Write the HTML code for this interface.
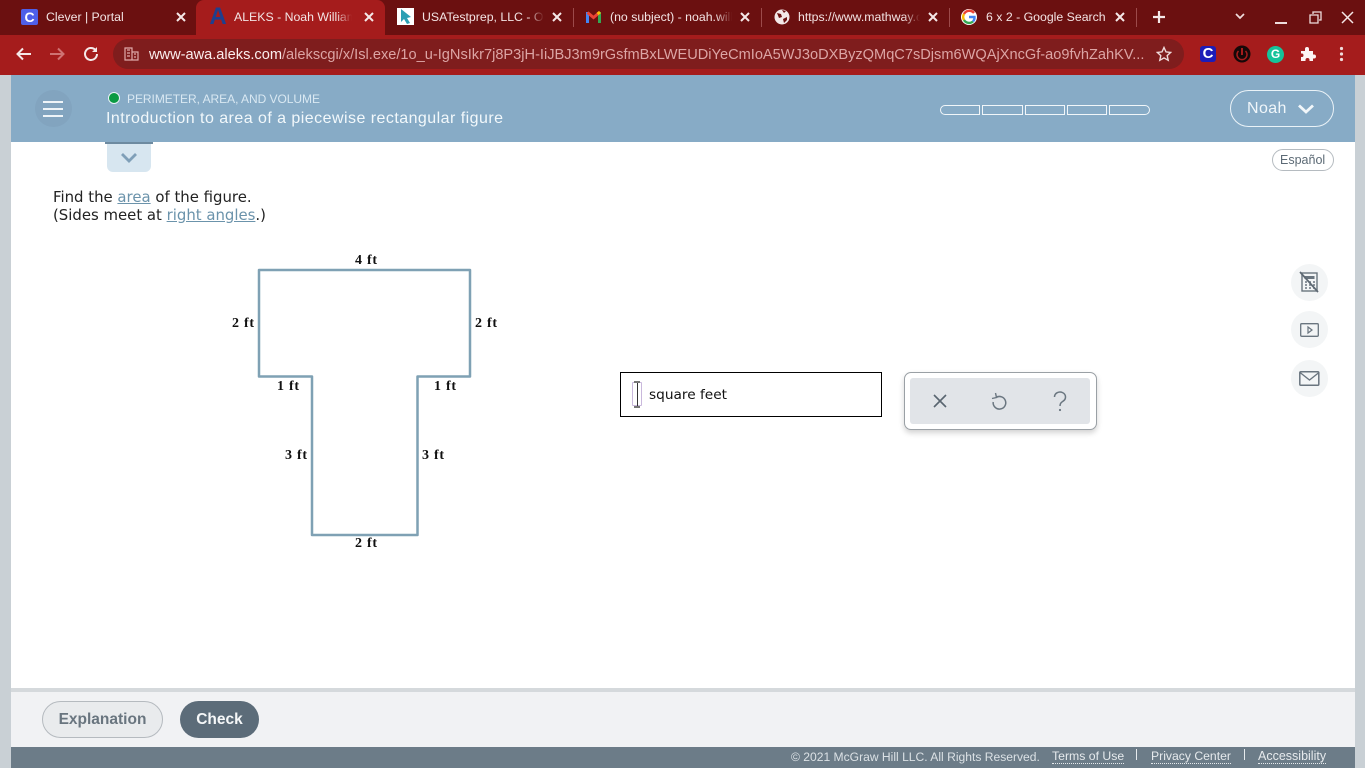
<!DOCTYPE html>
<html><head><meta charset="utf-8"><title>ALEKS</title>
<style>
html,body{margin:0;padding:0;width:1365px;height:768px;overflow:hidden;background:#fff;font-family:"Liberation Sans",sans-serif}
.a{position:absolute;white-space:nowrap}
.tab{font-size:12.3px;color:#f3e4e4;line-height:16px;top:9px;overflow:hidden}
.fade{position:absolute;top:5px;width:16px;height:24px}
.m{font:bold 14px "Liberation Serif",serif;color:#111;letter-spacing:.75px;line-height:16px}
.v{font-family:"DejaVu Sans",sans-serif;font-size:14.9px;color:#222;line-height:18px}
.v u{color:#6b93ab}
.sep{position:absolute;top:8px;width:1px;height:19px;background:#9c4a4a}
</style></head><body>
<div class="a" style="left:0;top:0;width:1365px;height:35px;background:#6b1010"></div>
<div class="a" style="left:196px;top:0;width:189px;height:36px;background:#a51c1c;border-radius:8px 8px 0 0"></div>
<div class="a" style="left:0;top:35px;width:1365px;height:40px;background:#a51c1c"></div>
<div class="a" style="left:113px;top:39px;width:1071px;height:30px;background:#7f1d1d;border-radius:15px"></div>

<div class="a" style="left:21px;top:9px;width:17px;height:16px;background:#4f5fe8;border-radius:2px;color:#fff;font:bold 14px/16px 'Liberation Sans';text-align:center">C</div>
<div class="a tab" style="left:46px">Clever | Portal</div>
<svg class="a" style="left:175px;top:11px" width="12" height="12"><path d="M2 2l8 8M10 2l-8 8" stroke="#f5e8e8" stroke-width="2"/></svg>

<div class="a" style="left:207px;top:5px;width:22px;color:#1d3f8f;font:bold 24px/24px 'Liberation Sans';text-align:center">A</div>
<div class="a tab" style="left:234px;width:118px">ALEKS - Noah Williams</div>
<div class="fade" style="left:336px;background:linear-gradient(90deg,rgba(165,28,28,0),#a51c1c)"></div>
<svg class="a" style="left:363px;top:11px" width="12" height="12"><path d="M2 2l8 8M10 2l-8 8" stroke="#f5e8e8" stroke-width="2"/></svg>

<div class="a" style="left:397px;top:8px;width:17px;height:17px;background:#fff"></div>
<svg class="a" style="left:397px;top:8px" width="17" height="17"><path d="M4 1l10 8-4 1 3 5-3 1-3-5-3 3z" fill="#2b9fb3"/></svg>
<div class="a tab" style="left:422px;width:122px">USATestprep, LLC - Online</div>
<div class="fade" style="left:528px;background:linear-gradient(90deg,rgba(107,16,16,0),#6b1010)"></div>
<svg class="a" style="left:551px;top:11px" width="12" height="12"><path d="M2 2l8 8M10 2l-8 8" stroke="#f5e8e8" stroke-width="2"/></svg>
<div class="sep" style="left:573px"></div>

<svg class="a" style="left:586px;top:10px" width="15" height="13"><path d="M1.500 13V2" stroke="#4285f4" stroke-width="3"/><path d="M13.500 13V2" stroke="#34a853" stroke-width="3"/><path d="M1.500 2.500l6 5 6-5" fill="none" stroke="#ea4335" stroke-width="3"/><path d="M11.500 4l2.500-2" stroke="#fbbc04" stroke-width="3"/></svg>
<div class="a tab" style="left:610px;width:122px">(no subject) - noah.williams</div>
<div class="fade" style="left:716px;background:linear-gradient(90deg,rgba(107,16,16,0),#6b1010)"></div>
<svg class="a" style="left:739px;top:11px" width="12" height="12"><path d="M2 2l8 8M10 2l-8 8" stroke="#f5e8e8" stroke-width="2"/></svg>
<div class="sep" style="left:761px"></div>

<svg class="a" style="left:774px;top:9px" width="16" height="16"><circle cx="8" cy="8" r="7.500" fill="#f3e8e8"/><path d="M3 4l4 1 1 3-3 1zM9 10l4-2 0 3-3 3zM8 1l4 1-2 2z" fill="#6b1010"/></svg>
<div class="a tab" style="left:798px;width:122px">https://www.mathway.com</div>
<div class="fade" style="left:904px;background:linear-gradient(90deg,rgba(107,16,16,0),#6b1010)"></div>
<svg class="a" style="left:927px;top:11px" width="12" height="12"><path d="M2 2l8 8M10 2l-8 8" stroke="#f5e8e8" stroke-width="2"/></svg>
<div class="sep" style="left:949px"></div>

<svg class="a" style="left:961px;top:9px" width="16" height="16"><circle cx="8" cy="8" r="8" fill="#fff"/><path d="M13 4A6 6 0 0 0 3 5" fill="none" stroke="#ea4335" stroke-width="2.400"/><path d="M3 5a6 6 0 0 0 0 6" fill="none" stroke="#fbbc04" stroke-width="2.400"/><path d="M3 11a6 6 0 0 0 9 1.500" fill="none" stroke="#34a853" stroke-width="2.400"/><path d="M8 8h5.500a6 6 0 0 1-1.500 4.500" fill="none" stroke="#4285f4" stroke-width="2.400"/></svg>
<div class="a tab" style="left:986px">6 x 2 - Google Search</div>
<svg class="a" style="left:1114px;top:11px" width="12" height="12"><path d="M2 2l8 8M10 2l-8 8" stroke="#f5e8e8" stroke-width="2"/></svg>
<div class="sep" style="left:1136px"></div>
<svg class="a" style="left:1152px;top:10px" width="14" height="14"><path d="M7 1v12M1 7h12" stroke="#f5e8e8" stroke-width="2.200"/></svg>
<svg class="a" style="left:1234px;top:12px" width="12" height="9"><path d="M2 2l4 4 4-4" fill="none" stroke="#f0dcdc" stroke-width="1.700"/></svg>
<div class="a" style="left:1275px;top:22px;width:12px;height:1.500px;background:#eedcdc"></div>
<svg class="a" style="left:1309px;top:11px" width="13" height="13"><path d="M4 3V1h8v8h-2M1 4h8v8H1z" fill="none" stroke="#eedcdc" stroke-width="1.300"/></svg>
<svg class="a" style="left:1341px;top:11px" width="13" height="13"><path d="M1 1l11 11M12 1L1 12" stroke="#f5e8e8" stroke-width="1.500"/></svg>

<svg class="a" style="left:15px;top:45px" width="18" height="18"><path d="M16 9H3M8 3.500L2.500 9 8 14.500" fill="none" stroke="#f5e8e8" stroke-width="2"/></svg>
<svg class="a" style="left:48px;top:45px" width="18" height="18"><path d="M2 9h13M10 3.500L15.500 9 10 14.500" fill="none" stroke="#cf7373" stroke-width="2"/></svg>
<svg class="a" style="left:82px;top:45px" width="18" height="18"><path d="M15 9a6 6 0 1 1-1.800-4.300" fill="none" stroke="#f5e8e8" stroke-width="2"/><path d="M15 2v5h-5z" fill="#f5e8e8"/></svg>
<svg class="a" style="left:124px;top:47px" width="15" height="14"><path d="M1 1h7v12H1zM8 5h6v8H8zM3 3h3M3 6h3M3 9h3M10 7h2M10 10h2" fill="none" stroke="#dfaaaa" stroke-width="1.200"/></svg>
<div class="a" style="left:149px;top:46px;font-size:14.6px;line-height:18px;color:#dca5a5;width:996px;overflow:hidden"><span style="color:#fbeeee">www-awa.aleks.com</span>/alekscgi/x/Isl.exe/1o_u-IgNsIkr7j8P3jH-IiJBJ3m9rGsfmBxLWEUDiYeCmIoA5WJ3oDXByzQMqC7sDjsm6WQAjXncGf-ao9fvhZahKV...</div>
<svg class="a" style="left:1156px;top:46px" width="16" height="16"><path d="M8 1.500l2 4.400 4.700.5-3.500 3.200 1 4.700L8 11.900l-4.200 2.400 1-4.700L1.300 6.400 6 5.900z" fill="none" stroke="#f0dcdc" stroke-width="1.400"/></svg>
<div class="a" style="left:1200px;top:46px;width:16px;height:16px;background:#1c1cb8;border-radius:3px;color:#fff;font:bold 15px/16px 'Liberation Sans';text-align:center">C</div>
<svg class="a" style="left:1233px;top:45px" width="18" height="18"><circle cx="9" cy="9" r="8.500" fill="#160808"/><path d="M9 3v7" stroke="#a51c1c" stroke-width="2"/><path d="M5.500 6a5 5 0 1 0 7 0" fill="none" stroke="#a51c1c" stroke-width="1.500"/></svg>
<div class="a" style="left:1267px;top:46px;width:17px;height:17px;background:#15c39a;border-radius:50%;color:#fff;font:bold 12px/17px 'Liberation Sans';text-align:center">G</div>
<svg class="a" style="left:1300px;top:46px" width="16" height="16"><path d="M1 5h4V3a2 2 0 0 1 4 0v2h4v3.500h1a2 2 0 0 1 0 4h-1V15H9.500v-1a2 2 0 0 0-4 0v1H1v-4h1.500a2 2 0 0 0 0-3.500H1z" fill="#fdf3f3"/></svg>
<svg class="a" style="left:1339px;top:46px" width="5" height="16"><circle cx="2.500" cy="2.500" r="1.600" fill="#f0dcdc"/><circle cx="2.500" cy="8" r="1.600" fill="#f0dcdc"/><circle cx="2.500" cy="13.500" r="1.600" fill="#f0dcdc"/></svg>

<div class="a" style="left:0;top:75px;width:11px;height:693px;background:#c9d0d5"></div>
<div class="a" style="left:1355px;top:75px;width:10px;height:693px;background:#c9d0d5"></div>
<div class="a" style="left:11px;top:75px;width:1344px;height:67px;background:#87abc6"></div>
<div class="a" style="left:35px;top:90px;width:37px;height:37px;border-radius:50%;background:#82a4bf"></div>
<div class="a" style="left:43px;top:101px;width:20px;height:2px;background:#eef4f8"></div>
<div class="a" style="left:43px;top:108px;width:20px;height:2px;background:#eef4f8"></div>
<div class="a" style="left:43px;top:115px;width:20px;height:2px;background:#eef4f8"></div>
<div class="a" style="left:108px;top:92px;width:10px;height:10px;border-radius:50%;background:#0a9a43;border:1px solid #eaf3f8;box-sizing:content-box"></div>
<div class="a" style="left:127px;top:91px;font-size:12px;line-height:16px;color:#d9e8f2;letter-spacing:-.04px">PERIMETER, AREA, AND VOLUME</div>
<div class="a" style="left:106px;top:109px;font-size:16px;line-height:19px;color:#f2f8fb;letter-spacing:.46px">Introduction to area of a piecewise rectangular figure</div>

<div class="a" style="left:940px;top:105px;width:38px;height:8px;border:1px solid #f1f6f9;border-radius:5px 0 0 5px"></div>
<div class="a" style="left:982px;top:105px;width:39px;height:8px;border:1px solid #f1f6f9"></div>
<div class="a" style="left:1025px;top:105px;width:38px;height:8px;border:1px solid #f1f6f9"></div>
<div class="a" style="left:1067px;top:105px;width:38px;height:8px;border:1px solid #f1f6f9"></div>
<div class="a" style="left:1109px;top:105px;width:39px;height:8px;border:1px solid #f1f6f9;border-radius:0 5px 5px 0"></div>
<div class="a" style="left:1230px;top:90px;width:102px;height:35px;border:1px solid #eaf2f7;border-radius:19px"></div>
<div class="a" style="left:1247px;top:99px;font-size:16px;line-height:20px;color:#f0f6fa;letter-spacing:.4px">Noah</div>
<svg class="a" style="left:1297px;top:103px" width="18" height="12"><path d="M2 2.500l7 6.500 7-6.500" fill="none" stroke="#f2f7fa" stroke-width="2.800"/></svg>

<div class="a" style="left:107px;top:142px;width:44px;height:30px;background:#d7e6f0;border-radius:0 0 6px 6px"></div>
<div class="a" style="left:105px;top:142px;width:48px;height:2px;background:#6d8aa0"></div>
<svg class="a" style="left:120px;top:152px" width="18" height="12"><path d="M2 2l7 7 7-7" fill="none" stroke="#7f9fb8" stroke-width="2.800"/></svg>

<div class="a" style="left:1272px;top:149px;width:60px;height:20px;border:1px solid #b5bbc0;border-radius:11px"></div>
<div class="a" style="left:1280px;top:152px;font-size:12.500px;line-height:16px;color:#5c6a75">Español</div>

<div class="a v" style="left:53px;top:188px">Find the <u>area</u> of the figure.</div>
<div class="a v" style="left:53px;top:206px">(Sides meet at <u>right angles</u>.)</div>

<svg class="a" style="left:250px;top:262px" width="230" height="280"><path d="M9 8H220V114.500H167.500V273H62V114.500H9z" fill="none" stroke="#7fa1b4" stroke-width="2.500" stroke-linejoin="round"/></svg>
<div class="a m" style="left:355px;top:253px">4 ft</div>
<div class="a m" style="left:232px;top:316px">2 ft</div>
<div class="a m" style="left:475px;top:316px">2 ft</div>
<div class="a m" style="left:277px;top:379px">1 ft</div>
<div class="a m" style="left:434px;top:379px">1 ft</div>
<div class="a m" style="left:285px;top:448px">3 ft</div>
<div class="a m" style="left:422px;top:448px">3 ft</div>
<div class="a m" style="left:355px;top:536px">2 ft</div>

<div class="a" style="left:620px;top:372px;width:260px;height:43px;border:1px solid #000"></div>
<div class="a" style="left:632px;top:382px;width:10px;height:24px;border:1.500px solid #c9b8dc;box-sizing:border-box;border-radius:1px"></div>
<div class="a" style="left:636.500px;top:381px;width:1px;height:26px;background:#333"></div>
<div class="a" style="left:634px;top:381px;width:6px;height:1.500px;background:#777"></div>
<div class="a" style="left:634px;top:406px;width:6px;height:1.500px;background:#777"></div>
<div class="a v" style="left:649px;top:386px;color:#111;font-size:13.7px">square feet</div>

<div class="a" style="left:904px;top:372px;width:191px;height:56px;border:1px solid #9aa0a5;border-radius:7px;box-shadow:0 3px 6px rgba(0,0,0,.18);background:#fff"></div>
<div class="a" style="left:910px;top:378px;width:180px;height:46px;background:#e1e4e8;border-radius:3px"></div>
<svg class="a" style="left:932px;top:393px" width="16" height="16"><path d="M2 2l12 12M14 2L2 14" stroke="#596570" stroke-width="1.600"/></svg>
<svg class="a" style="left:991px;top:392px" width="17" height="19"><path d="M5 5.500a6.300 6.300 0 1 1-2.800 4.500" fill="none" stroke="#6a7680" stroke-width="1.500"/><path d="M4.500 1l1 4.500-4.500 1" fill="none" stroke="#6a7680" stroke-width="1.400"/></svg>
<svg class="a" style="left:1052px;top:391px" width="16" height="21"><path d="M2.500 6a5.500 5 0 1 1 8.500 4.200C9 11.500 8 12.500 8 15" fill="none" stroke="#6a7680" stroke-width="1.500"/><circle cx="8" cy="19" r="1.100" fill="#6a7680"/></svg>

<div class="a" style="left:1291px;top:264px;width:37px;height:37px;border-radius:50%;background:#f3f5f6"></div>
<svg class="a" style="left:1299px;top:271px" width="20" height="22"><rect x="3" y="2" width="15" height="18" fill="none" stroke="#6a757f" stroke-width="1.400"/><path d="M5.500 5h10v3h-10z" fill="#6a757f"/><path d="M6 11h2M10 11h2M14 11h2M6 14h2M10 14h2M14 14h2M6 17h2M10 17h2M14 17h2" stroke="#6a757f" stroke-width="1.600"/><path d="M1 1l18 20" stroke="#5e6973" stroke-width="1.700"/></svg>
<div class="a" style="left:1291px;top:311px;width:37px;height:37px;border-radius:50%;background:#f3f5f6"></div>
<svg class="a" style="left:1300px;top:323px" width="19" height="14"><rect x=".7" y=".7" width="17.600" height="12.600" rx="1" fill="none" stroke="#6a757f" stroke-width="1.300"/><path d="M8 4v6l4-3z" fill="none" stroke="#6a757f" stroke-width="1.200"/></svg>
<div class="a" style="left:1291px;top:360px;width:37px;height:37px;border-radius:50%;background:#f3f5f6"></div>
<svg class="a" style="left:1299px;top:371px" width="21" height="15"><rect x=".8" y=".8" width="19" height="13.400" rx="1" fill="none" stroke="#6a757f" stroke-width="1.500"/><path d="M1 1.500l9.500 7.500L20 1.500" fill="none" stroke="#6a757f" stroke-width="1.300"/></svg>

<div class="a" style="left:11px;top:688px;width:1344px;height:59px;background:#f1f2f4"></div>
<div class="a" style="left:11px;top:688px;width:1344px;height:4px;background:#d5d9dc"></div>
<div class="a" style="left:42px;top:701px;width:119px;height:35px;border:1px solid #b5babf;border-radius:19px;background:#e9ebed"></div>
<div class="a" style="left:42px;top:711px;width:121px;text-align:center;font:bold 15.500px/18px 'Liberation Sans';color:#69757f">Explanation</div>
<div class="a" style="left:180px;top:701px;width:79px;height:37px;border-radius:19px;background:#5c6c79"></div>
<div class="a" style="left:180px;top:711px;width:79px;text-align:center;font:bold 15.500px/18px 'Liberation Sans';color:#f6f8f9">Check</div>

<div class="a" style="left:11px;top:747px;width:1344px;height:21px;background:#6c7c88"></div>
<div class="a" style="left:791px;top:750px;font-size:12.1px;line-height:15px;color:#dbe1e5">© 2021 McGraw Hill LLC. All Rights Reserved.</div>
<div class="a" style="left:1052px;top:749px;font-size:12.250px;line-height:14px;color:#e6eaed;border-bottom:1px dotted #e6eaed">Terms of Use</div>
<div class="a" style="left:1136px;top:749px;width:1px;height:11px;background:#e6eaed"></div>
<div class="a" style="left:1151px;top:749px;font-size:12.200px;line-height:14px;color:#e6eaed;border-bottom:1px dotted #e6eaed">Privacy Center</div>
<div class="a" style="left:1244px;top:749px;width:1px;height:11px;background:#e6eaed"></div>
<div class="a" style="left:1258px;top:749px;font-size:12.500px;line-height:14px;color:#e6eaed;border-bottom:1px dotted #e6eaed">Accessibility</div>
</body></html>
